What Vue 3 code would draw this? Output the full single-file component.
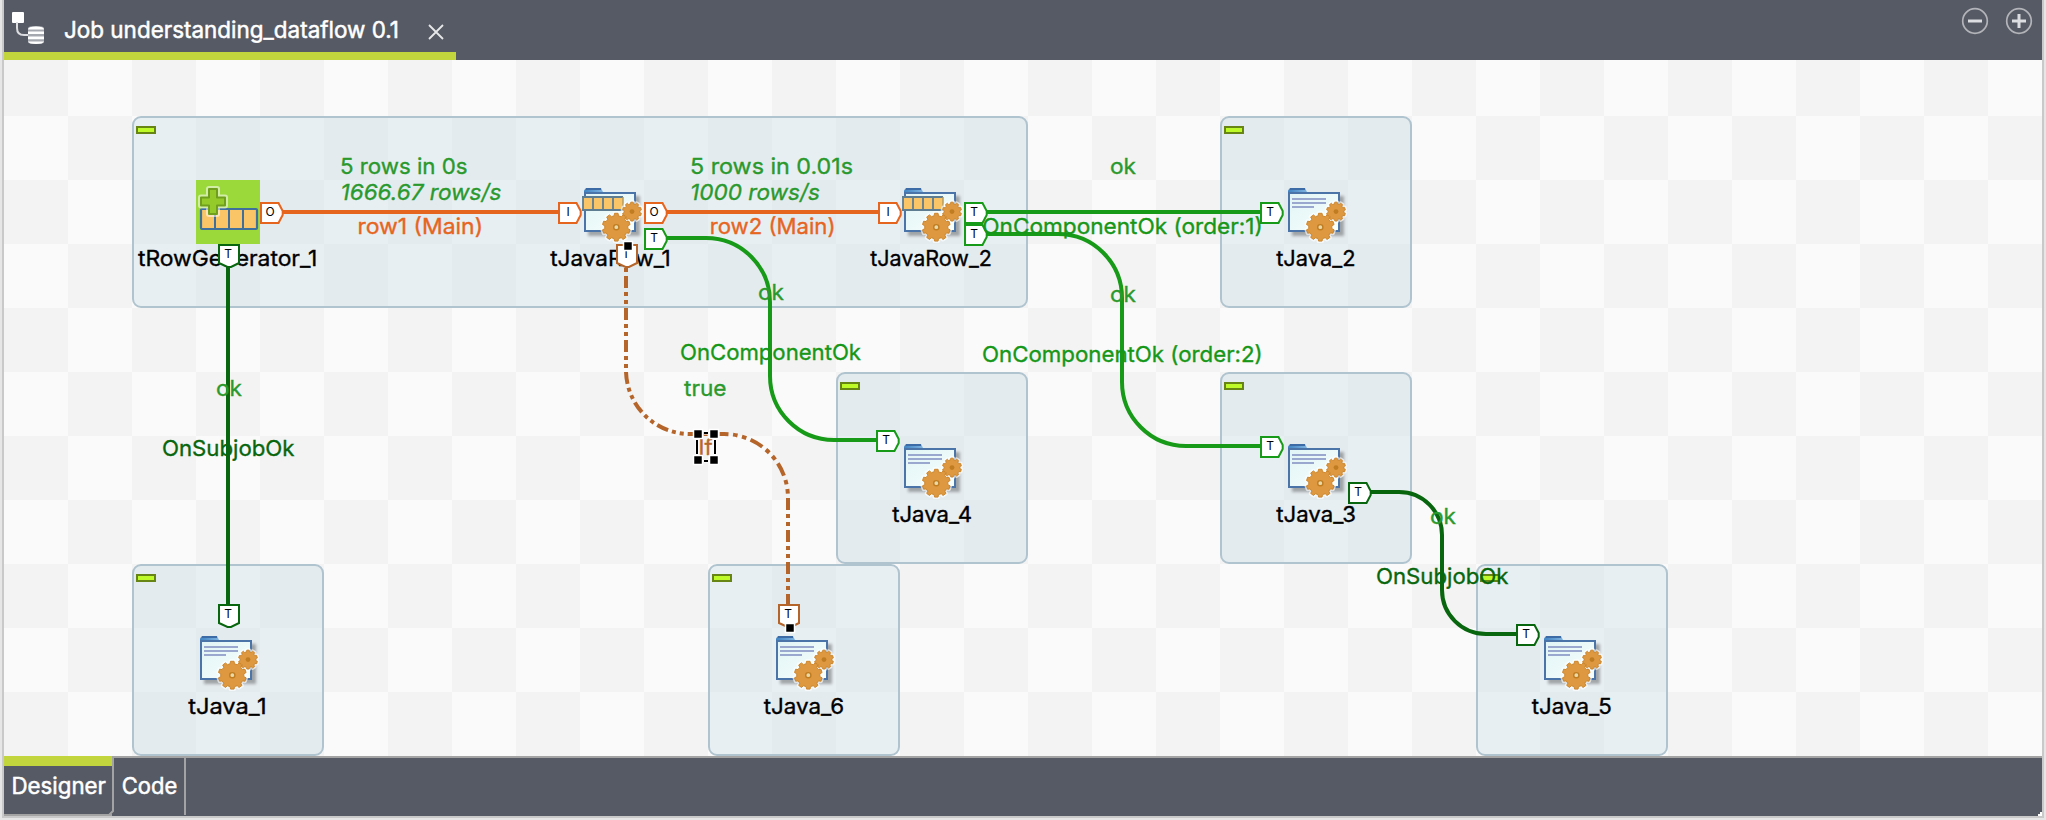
<script setup>
const subjobs = [
  { x: 132, y: 116, w: 896 },
  { x: 1220, y: 116, w: 192 },
  { x: 836, y: 372, w: 192 },
  { x: 1220, y: 372, w: 192 },
  { x: 132, y: 564, w: 192 },
  { x: 708, y: 564, w: 192 },
  { x: 1476, y: 564, w: 192 },
]

const nodes = [
  { x: 580, y: 180, row: true },
  { x: 900, y: 180, row: true },
  { x: 1284, y: 180 },
  { x: 900, y: 436 },
  { x: 1284, y: 436 },
  { x: 196, y: 628 },
  { x: 772, y: 628 },
  { x: 1540, y: 628 },
]

const names = [
  { t: 'tRowGenerator_1', x1: 138.8, x2: 316, y: 265.8 },
  { t: 'tJavaRow_1', x1: 551, x2: 669.5, y: 265.8 },
  { t: 'tJavaRow_2', x1: 871, x2: 990.7, y: 265.8 },
  { t: 'tJava_2', x1: 1277, x2: 1354.3, y: 265.8 },
  { t: 'tJava_4', x1: 893, x2: 971, y: 521.8 },
  { t: 'tJava_3', x1: 1277, x2: 1354.8, y: 521.8 },
  { t: 'tJava_1', x1: 189, x2: 265.5, y: 713.8 },
  { t: 'tJava_6', x1: 764.5, x2: 843, y: 713.8 },
  { t: 'tJava_5', x1: 1532.6, x2: 1610.5, y: 713.8 },
]

const labels = [
  { t: '5 rows in 0s', x1: 341, x2: 466.5, y: 173.8, c: 'stat' },
  { t: '1666.67 rows/s', x1: 341.5, x2: 500.5, y: 199.8, c: 'stat italic' },
  { t: 'row1 (Main)', x1: 358.5, x2: 482, y: 233.8, c: 'main' },
  { t: '5 rows in 0.01s', x1: 691, x2: 852, y: 173.8, c: 'stat' },
  { t: '1000 rows/s', x1: 691, x2: 819, y: 199.8, c: 'stat italic' },
  { t: 'row2 (Main)', x1: 710.7, x2: 834.5, y: 233.8, c: 'main' },
  { t: 'ok', x1: 1111, x2: 1135, y: 173.8, c: 'stat' },
  { t: 'OnComponentOk (order:1)', x1: 983.3, x2: 1261.7, y: 233.8, c: 'comp' },
  { t: 'ok', x1: 1111, x2: 1135, y: 301.8, c: 'stat' },
  { t: 'OnComponentOk (order:2)', x1: 983, x2: 1261.7, y: 361.8, c: 'comp' },
  { t: 'ok', x1: 759, x2: 783, y: 299.8, c: 'stat' },
  { t: 'OnComponentOk', x1: 681, x2: 860, y: 359.8, c: 'comp' },
  { t: 'true', x1: 685, x2: 725.5, y: 395.8, c: 'stat' },
  { t: 'If', x1: 699.5, x2: 711.5, y: 454.8, c: 'cond' },
  { t: 'ok', x1: 217, x2: 241, y: 395.8, c: 'stat' },
  { t: 'OnSubjobOk', x1: 163, x2: 293.5, y: 455.8, c: 'sub' },
  { t: 'ok', x1: 1431, x2: 1455, y: 523.8, c: 'stat' },
  { t: 'OnSubjobOk', x1: 1377, x2: 1507.5, y: 583.8, c: 'sub' },
]

const ports = [
  { x: 260, y: 202, t: 'O', c: 'main' },
  { x: 558, y: 202, t: 'I', c: 'main' },
  { x: 644, y: 202, t: 'O', c: 'main' },
  { x: 878, y: 202, t: 'I', c: 'main' },
  { x: 644, y: 228, t: 'T', c: 'comp' },
  { x: 964, y: 202, t: 'T', c: 'comp' },
  { x: 964, y: 224, t: 'T', c: 'comp' },
  { x: 1260, y: 202, t: 'T', c: 'comp' },
  { x: 876, y: 430, t: 'T', c: 'comp' },
  { x: 1260, y: 436, t: 'T', c: 'comp' },
  { x: 1348, y: 482, t: 'T', c: 'sub' },
  { x: 1516, y: 624, t: 'T', c: 'sub' },
  { x: 218, y: 244, t: 'T', c: 'sub', down: true },
  { x: 218, y: 604, t: 'T', c: 'sub', down: true },
  { x: 616, y: 244, t: 'I', c: 'cond', down: true },
  { x: 778, y: 604, t: 'T', c: 'cond', down: true },
]

const handles = [
  [628, 246], [790, 628], [698, 434], [714, 434], [698, 460], [714, 460],
]

function gear(cx, cy, r, teeth) {
  const pts = []
  const step = (Math.PI * 2) / teeth
  const at = (a, rad) => `${(cx + Math.cos(a) * rad).toFixed(2)} ${(cy + Math.sin(a) * rad).toFixed(2)}`
  for (let i = 0; i < teeth; i++) {
    const a = i * step - Math.PI / 2
    pts.push(at(a - step * 0.3, r * 0.83), at(a - step * 0.2, r), at(a + step * 0.2, r), at(a + step * 0.3, r * 0.83))
  }
  return `M${pts.join('L')}Z`
}
const bigGear = gear(36.3, 47.2, 14, 10)
const smallGear = gear(52, 31.6, 9.5, 10)
</script>

<template>
  <div class="window">
    <header class="titlebar">
      <div class="tab">
        <svg class="job-icon" width="36" height="36" viewBox="10 10 36 36">
          <rect x="12" y="12" width="12" height="11" rx="1" fill="#fff" />
          <path d="M17 22v6q0 7 7 7h5" fill="none" stroke="#dcdde0" stroke-width="2" />
          <path d="M28 28q0-2 8-2t8 2v14q0 2-8 2t-8-2z" fill="#a5a8ae" />
          <path d="M28 29.5q0-3 8-3t8 3zM28 31.5h16v2.6H28zM28 36.5h16v2.8H28zM28 41.5h16q-1 2.5-8 2.5t-8-2.5z" fill="#fff" />
        </svg>
        <svg class="tab-title" width="340" height="40" viewBox="0 0 340 40">
          <text x="0" y="28.4" textLength="335" lengthAdjust="spacingAndGlyphs">Job understanding_dataflow 0.1</text>
        </svg>
        <svg class="close" width="16" height="16" viewBox="0 0 16 16">
          <path d="M1 1l14 14M15 1L1 15" fill="none" stroke="#e6e7e9" stroke-width="1.8" />
        </svg>
      </div>
      <div class="tools">
        <svg width="28" height="28" viewBox="-14 -14 28 28">
          <circle r="12.3" /><path d="M-7 0H7" />
        </svg>
        <svg width="28" height="28" viewBox="-14 -14 28 28">
          <circle r="12.3" /><path d="M-7 0H7M0-7V7" />
        </svg>
      </div>
    </header>

    <main class="canvas">
      <svg class="diagram" width="2038" height="696" viewBox="4 60 2038 696">
        <defs>
          <linearGradient id="paper" x1="0" y1="0" x2="1" y2="1">
            <stop offset="0" stop-color="#e2f4f6" /><stop offset="1" stop-color="#f6fffc" />
          </linearGradient>
          <linearGradient id="flap" x1="0" y1="0" x2="1" y2="0">
            <stop offset="0" stop-color="#3f83c2" /><stop offset="1" stop-color="#7fb4e0" />
          </linearGradient>
          <filter id="soft" x="-20%" y="-20%" width="140%" height="140%">
            <feGaussianBlur stdDeviation="1.5" />
          </filter>
          <g id="gears">
            <g fill="none" stroke="#fff" stroke-width="4" stroke-linejoin="round" opacity=".65">
              <path :d="smallGear" /><path :d="bigGear" />
            </g>
            <g fill="#dd9840" stroke="#cd862c" stroke-width="1" stroke-linejoin="round">
              <path :d="smallGear" /><path :d="bigGear" />
            </g>
            <circle cx="52" cy="31.6" r="2.4" fill="#c07c20" />
            <circle cx="36.3" cy="47.2" r="2.6" fill="#e8d9a8" stroke="#c07c20" stroke-width="1.4" />
          </g>
          <g id="folder">
            <rect x="8" y="16" width="52" height="40" fill="#000" opacity=".3" filter="url(#soft)" />
            <path d="M4 12V10.500L6 8H21L23 12Z" fill="url(#flap)" />
            <path d="M6 9H21" stroke="#3c6ba5" stroke-width="2" />
            <rect x="5" y="13" width="50" height="38" fill="url(#paper)" stroke="#4b75a8" stroke-width="2" />
          </g>
        </defs>

        <g v-for="s in subjobs" :key="s.x + '-' + s.y">
          <rect class="subjob" :x="s.x + 1" :y="s.y + 1" :width="s.w - 2" height="190" rx="8" />
          <rect class="collapse" :x="s.x + 5" :y="s.y + 11" width="18" height="6" />
        </g>

        <g v-for="n in nodes" :key="n.x + '/' + n.y" :transform="`translate(${n.x} ${n.y})`">
          <use href="#folder" />
          <path v-if="!n.row" d="M8 19H42M8 23H42M8 27H30" stroke="#9aa8cf" stroke-width="2" />
          <g v-else>
            <rect x="3" y="17" width="40" height="13" fill="#f9c567" />
            <path d="M2 17H43M2 30H43M3 16V31M13 17V30M23 17V30M33 17V30" fill="none" stroke="#5f7d90" stroke-width="1.8" />
            <path d="M43 17V30" stroke="#b49a62" stroke-width="1.5" />
          </g>
          <use href="#gears" />
        </g>

        <g>
          <rect x="196" y="180" width="64" height="64" fill="#9bd93a" />
          <rect x="201" y="209" width="56" height="20" rx="1" fill="#f9c567" stroke="#3f6f9b" stroke-width="2.2" />
          <path d="M215 209V229M229 209V229M243 209V229" stroke="#3f6f9b" stroke-width="2" />
          <path d="M209 189h8v8.500h8v8h-8v8.500h-8v-8.500h-8v-8h8z" fill="none" stroke="#fff" stroke-width="6" stroke-linejoin="round" opacity=".55" />
          <path d="M209 189h8v8.500h8v8h-8v8.500h-8v-8.500h-8v-8h8z" fill="#94cb2b" stroke="#6f9f1c" stroke-width="2" stroke-linejoin="round" />
        </g>

        <text
          v-for="n in names" :key="n.t" class="name" :x="n.x1 - 0.8" :y="n.y"
          :textLength="n.x2 - n.x1 + 2" lengthAdjust="spacingAndGlyphs"
        >{{ n.t }}</text>

        <g class="wires">
          <path class="main" d="M280 212H560M664 212H880" />
          <path class="comp" d="M984 212H1262" />
          <path class="comp" d="M664 238H706A64 64 0 0 1 770 302V376A64 64 0 0 0 834 440H878" />
          <path class="comp" d="M984 234H1058A64 64 0 0 1 1122 298V382A64 64 0 0 0 1186 446H1262" />
          <path class="sub" d="M228 262V606" />
          <path class="sub" d="M1368 492H1399A43 43 0 0 1 1442 535V590A44 44 0 0 0 1486 634H1518" />
          <path class="cond" d="M626 244V370A64 64 0 0 0 690 434H724" />
          <path class="cond" pathLength="88" stroke-dashoffset="8" d="M724 434A64 64 0 0 1 788 498" />
          <path class="cond" d="M788 498V606" />
        </g>

        <g v-for="p in ports" :key="p.x + ':' + p.y" :transform="`translate(${p.x} ${p.y})`">
          <path v-if="p.down" class="port" :class="p.c" d="M1 1H21V19L13 22.900H9.500L1 19Z" />
          <path v-else class="port" :class="p.c" d="M1 1H18.500L22.700 9V13L18.500 21H1Z" />
          <text class="port-text" x="10" y="14">{{ p.t }}</text>
        </g>

        <text
          v-for="(l, i) in labels" :key="i" class="label" :class="l.c" :x="l.x1 - 1" :y="l.y"
          :textLength="l.x2 - l.x1 + 2" lengthAdjust="spacingAndGlyphs"
        >{{ l.t }}</text>

        <path d="M697 438V456M715 438V456M704 433H708M704 461H708" stroke="#fff" stroke-width="4" opacity=".6" />
        <path d="M697 440V454M715 440V454M704 433H708M704 461H708" stroke="#000" stroke-width="2" />
        <rect v-for="h in handles" :key="h.join()" class="handle" :x="h[0] - 4.5" :y="h[1] - 4.5" width="9" height="9" />
      </svg>
    </main>

    <footer class="bottombar">
      <div class="view active">
        <svg width="108" height="60" viewBox="4 756 108 60">
          <text x="11.500" y="793.800" textLength="94.500" lengthAdjust="spacingAndGlyphs">Designer</text>
        </svg>
      </div>
      <svg class="edge" width="8" height="60" viewBox="106 756 8 60">
        <path d="M113 756V811L109 815H106" fill="none" stroke="#a3a3a3" stroke-width="2" />
      </svg>
      <div class="view code">
        <svg width="70" height="56" viewBox="114 758 70 56">
          <text x="121.800" y="793.800" textLength="55.500" lengthAdjust="spacingAndGlyphs">Code</text>
        </svg>
      </div>
      <svg class="corner" width="4" height="4" viewBox="0 0 4 4">
        <path d="M2 0H4V4H0V2H2Z" fill="#fff" />
      </svg>
    </footer>
  </div>
</template>

<style>
html, body { margin: 0; background: #e6e6e6; overflow: hidden; }
</style>

<style scoped>
.window {
  box-sizing: border-box;
  width: 2042px;
  height: 818px;
  margin-left: 2px;
  border: 2px solid #c9c9c9;
  border-top: 0;
  display: flex;
  flex-direction: column;
  font-family: Inter, "Liberation Sans", sans-serif;
}
svg { display: block; flex: none; }
.titlebar {
  height: 60px;
  flex: none;
  display: flex;
  justify-content: space-between;
  background: #565a64;
}
.tab {
  box-sizing: border-box;
  width: 452px;
  height: 60px;
  padding: 10px 0 0 6px;
  display: flex;
  align-items: flex-start;
  border-bottom: 8px solid #c2d53d;
}
.tab-title { margin-left: 18px; }
.tab-title text, .view text { fill: #fff; font-size: 22.5px; stroke: #fff; stroke-width: .5; }
.close { margin: 14px 0 0 24px; }
.tools { display: flex; gap: 16px; padding: 7px 9px 0 0; }
.tools circle { fill: none; stroke: #b2b4b9; stroke-width: 1.7; }
.tools path { fill: none; stroke: #dcdde0; stroke-width: 3; }

.canvas {
  height: 696px;
  flex: none;
  background: conic-gradient(#fafafa 25%, #f3f3f3 0 50%, #fafafa 0 75%, #f3f3f3 0) 0 -8px / 128px 128px;
}
.subjob { fill: rgba(205, 222, 232, .4); stroke: #b0c4cf; stroke-width: 2; }
.collapse { fill: #befa28; stroke: #668515; stroke-width: 2; }
.wires path { fill: none; stroke-width: 4; }
.main { stroke: #e5641e; }
.comp { stroke: #179a18; }
.sub { stroke: #08660e; }
.cond { stroke: #b5652a; }
.wires .cond { stroke-dasharray: 12 4 4 4 4 4; }
.port { fill: #fff; stroke-width: 2; }
.port-text { fill: #000; font-size: 12px; text-anchor: middle; }
.name, .label { font-size: 21.8px; stroke-width: .35; }
.name { fill: #000; stroke: #000; }
.label.stat { fill: #2a992d; stroke: #2a992d; }
.label.comp { fill: #179718; stroke: #179718; }
.label.sub { fill: #08660e; stroke: #08660e; }
.label.main { fill: #e6651f; stroke: #e6651f; }
.label.cond { fill: #b7662b; stroke: #b7662b; }
.label.italic { font-style: italic; }
.handle { fill: #000; stroke: #fff; stroke-width: 1.5; }

.bottombar {
  box-sizing: border-box;
  height: 60px;
  flex: none;
  display: flex;
  background: #565a64;
  box-shadow: inset 0 2px #a3a3a3;
}
.view.active {
  box-sizing: border-box;
  width: 108px;
  background: linear-gradient(#c2d53d 10px, #565a64 10px 58px, #a3a3a3 58px);
}
.edge { margin-left: -6px; }
.view.code { margin-top: 2px; height: 57px; border-right: 2px solid #a3a3a3; }
.corner { margin: auto 0 0 auto; }
</style>
